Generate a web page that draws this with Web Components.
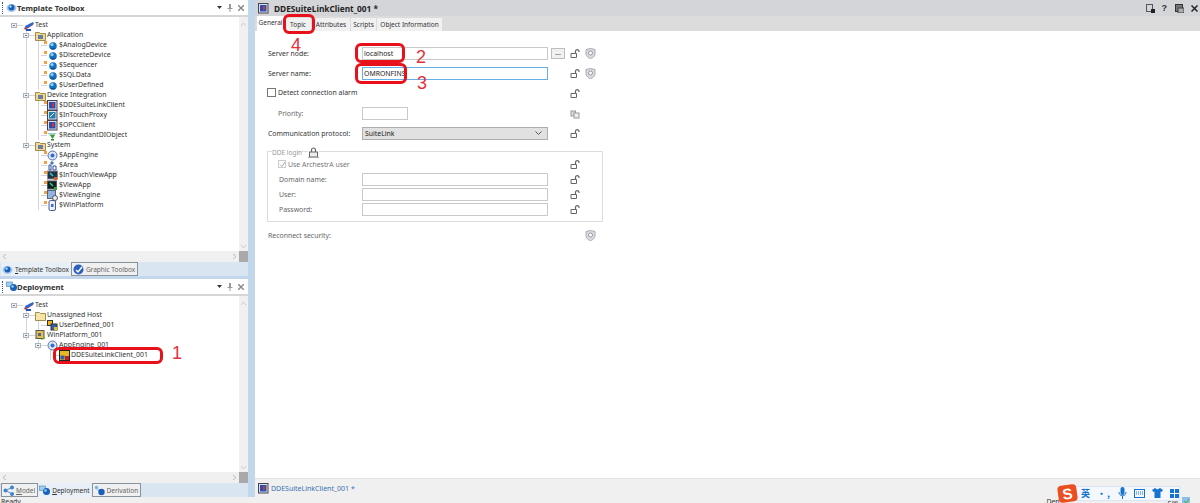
<!DOCTYPE html>
<html><head><meta charset="utf-8"><style>
html,body{margin:0;padding:0;background:#fff}
body{width:1200px;height:503px;overflow:hidden;font:6.9px "Noto Sans","Liberation Sans",sans-serif;color:#333}
</style></head><body>
<app-shell></app-shell>
<script>
const I={
 app:'<path d="M1 8 9 3l1 2-8 5z" fill="#d33"/><path d="M2 6l8-4 1 2-8 5z" fill="#36c"/><path d="M3 9h5v2H3z" fill="#25a"/>',
 globe:'<circle cx="6" cy="6" r="3.800" fill="#1470c0"/><circle cx="5" cy="4.600" r="1.600" fill="#8fd0f5"/><path d="M3.200 8.200a3.600 3.600 0 0 0 5.600 0z" fill="#0a4a90"/>',
 folder:'<path d="M.5 2.500h4l1 1h5v7H.5z" fill="#f0d890" stroke="#8a7530" stroke-width=".8"/><rect x="3" y="5" width="5" height="4" fill="#6a7fa0"/>',
 folderplain:'<path d="M.5 2.500h4l1 1h5v7H.5z" fill="#f7e5a5" stroke="#8a7530" stroke-width=".8"/>',
 dev:'<rect x=".5" y=".5" width="9.500" height="9.500" fill="#dde" stroke="#445"/><rect x="2" y="2" width="6.500" height="6.500" fill="#2650b0"/><rect x="5" y="3" width="2" height="4" fill="#c33"/>',
 dev2:'<rect x=".5" y=".5" width="9.500" height="9.500" fill="#dde" stroke="#445"/><rect x="2" y="2" width="6.500" height="6.500" fill="#2080b0"/><path d="M3 7l4-4" stroke="#fff"/>',
 red:'<path d="M0 3h10L5 7z" fill="#9cc"/><path d="M3 5h5L5.500 9z" fill="#3a9a20"/><path d="M4 9h3v1.500H4z" fill="#383"/>',
 engine:'<circle cx="5.500" cy="5.500" r="4.500" fill="#dfe6f5" stroke="#5570b0"/><circle cx="5.500" cy="5.500" r="2" fill="#2a70d0"/>',
 area:'<path d="M5 1l2 2-2 2-2-2z" fill="#4a70c0"/><path d="M2 5v5h2V5zM6 6v4h3V6z" fill="none" stroke="#2a50a0"/>',
 view:'<rect x=".5" y="1" width="10" height="8" fill="#234" stroke="#889"/><path d="M3 3l3 3" stroke="#3cc" stroke-width="1.500"/><rect x="7" y="7" width="3" height="3" fill="#e06020"/>',
 view2:'<rect x=".5" y="1" width="9" height="8" fill="#122" stroke="#556"/><path d="M3 3l3 3" stroke="#3c8" stroke-width="1.500"/><rect x="7" y="7" width="3" height="3" fill="#3a3"/>',
 vengine:'<rect x=".5" y=".5" width="8" height="8" fill="#8fb5e0" stroke="#568"/><circle cx="8" cy="8" r="2.500" fill="#eee" stroke="#556"/>',
 plat:'<rect x="2" y=".5" width="6.500" height="10" rx="1.500" fill="#eef" stroke="#4a5a90"/><rect x="4" y="4" width="2.500" height="3" fill="#3a70c0"/>',
 inst:'<rect x=".5" y=".5" width="5" height="5" fill="#e8b820" stroke="#333"/><rect x="4" y="4" width="6" height="6" fill="#3060b0" stroke="#333"/><rect x="7" y="7" width="3" height="3" fill="#e8c020"/>',
 instw:'<rect x="1" y=".5" width="8" height="8" fill="#ddc060" stroke="#555"/><rect x="3" y="3" width="3" height="3" fill="#666"/><path d="M6 10l3-4 1 3z" fill="#7ab030"/>',
 instd:'<rect x=".5" y=".5" width="10" height="10" fill="#e8b820" stroke="#222"/><rect x="1.500" y="5.500" width="4" height="4" fill="#3060b0"/><rect x="6" y="6" width="4" height="4" fill="#c02020"/>',
 model:'<circle cx="2.500" cy="5.500" r="2" fill="#3a7fd0"/><circle cx="9" cy="2.500" r="2" fill="#3a7fd0"/><circle cx="9" cy="9" r="2" fill="#3a7fd0"/><path d="M2.500 5.500 9 2.500M2.500 5.500 9 9" stroke="#5a8fd0"/>',
 deploy:'<rect x=".5" y="1" width="6" height="4.500" fill="#9cd0f0" stroke="#5a90c0" stroke-width=".7"/><circle cx="7.500" cy="6.500" r="3.500" fill="#1a60b8"/><circle cx="6.500" cy="5.500" r="1.300" fill="#8fd0f5"/>',
 deriv:'<path d="M1 2l5 3-2 1z" fill="#9cd0f0"/><circle cx="7.500" cy="7" r="3.200" fill="#1a60b8"/><circle cx="2.500" cy="2.500" r="1.800" fill="#7ab8e8"/>',
 tmpl:'<ellipse cx="5.500" cy="6" rx="5" ry="4" fill="#a8c8ee"/><circle cx="5.500" cy="5.500" r="3" fill="#1a60b8"/><circle cx="4.500" cy="4.500" r="1.200" fill="#9fd8f8"/>',
 gfx:'<circle cx="5.500" cy="5.500" r="5" fill="#2a60c0"/><path d="M3 6l2 2 4-5" stroke="#fff" stroke-width="1.500" fill="none"/>',
 lock:'<path d="M1 5.500h5.500v4H1z" fill="#fff" stroke="#666"/><path d="M5.500 5.500V3a1.800 1.800 0 0 1 3.500 0V4" fill="none" stroke="#666" stroke-width="1.200"/>',
 lockd:'<rect x="1" y="3" width="4.500" height="5" fill="#ddd" stroke="#999"/><rect x="4" y="5" width="5" height="5" fill="#eee" stroke="#999"/>',
 lockc:'<rect x="1.500" y="5" width="8" height="5" fill="#eee" stroke="#666"/><path d="M3.500 5V3a2 2 0 0 1 4 0v2" fill="none" stroke="#666" stroke-width="1.200"/><path d="M0 10.500h11" stroke="#aaa"/>',
 shield:'<path d="M1 1.500 5.500.5l4.500 1v4.500C10 8.500 7 10 5.500 11 4 10 1 8.500 1 6z" fill="#d8dcdc" stroke="#aab"/><circle cx="5.500" cy="5" r="2" fill="#fff" stroke="#999"/>'
};
const svg=(k,w=11,h=11,vb='0 0 11 11')=>`<svg width="${w}" height="${h}" viewBox="${vb}" style="display:block;flex:none">${I[k]||''}</svg>`;
function def(name,html,init){customElements.define(name,class extends HTMLElement{connectedCallback(){if(this.shadowRoot)return;const r=this.attachShadow({mode:'open'});r.innerHTML=typeof html==='function'?html(this):html;init&&init(r,this)}})}

def('tree-row',h=>{
 const d=+h.getAttribute('depth'),box=h.hasAttribute('box'),leaf=h.hasAttribute('leaf'),g=(h.getAttribute('guides')||'').split(',').filter(Boolean);
 const bg=g.map(x=>`linear-gradient(#d4d4d4,#d4d4d4) ${x}px 0/1px 100% no-repeat`).join(',');
 const base=[17,29,41,53][d];
 return `<style>:host{display:flex;height:10px;align-items:center;${bg?'background:'+bg+';':''}}
 .pad{width:${base}px;flex:none;display:flex;justify-content:flex-end}
 .box{width:6px;height:5px;border:1px solid #a9b4c0;background:#eef1f4;box-sizing:border-box;position:relative}
 .box:after{content:"";position:absolute;left:1px;right:1px;top:1px;height:1px;background:#778}
 .tick{width:6px;height:1px;background:#d4d4d4;flex:none}
 .dot{width:3px;height:3px;background:#f8a040;margin-left:-3px;margin-top:-6px;flex:none}
 span{white-space:nowrap;margin-left:1px;color:#333;font-size:6.900px;line-height:10px}
 </style><div class="pad">${box?'<div class="box"></div>':''}</div>
 <div class="tick"></div>${leaf?'<div class="dot"></div>':''}
 ${svg(h.getAttribute('icon'))}<span>${h.getAttribute('label')}</span>`;
});

def('dock-header',h=>`<style>:host{display:flex;align-items:center;height:15px;background:#fff;border-bottom:2px solid #d6d6d6}
 .grip{width:1px;height:12px;margin:0 2px 0 2px;border-left:1px dotted #2a50a0;flex:none}
 b{font-size:7.700px;color:#333;white-space:nowrap}
 .sp{flex:1}.c{display:flex;gap:5px;align-items:center;margin-right:4px;color:#666}
 </style><div class="grip"></div>${svg(h.getAttribute('icon'),11,11)}<b>${h.getAttribute('label')}</b><div class="sp"></div>
 <div class="c"><svg width="5" height="3"><path d="M0 0h5L2.500 3z" fill="#333"/></svg>
 <svg width="6" height="8"><path d="M2 0h2v4h1.500v1H3.500v3h-1V5H.5V4H2z" fill="#999"/></svg>
 <svg width="6" height="6"><path d="M0 0l6 6M6 0 0 6" stroke="#888" stroke-width="1.400"/></svg></div>`);

def('tree-pane',h=>`<style>:host{display:flex;flex:1;min-height:0;background:#fff}
 .m{flex:1;min-width:0;display:flex;flex-direction:column}
 .t{flex:1;padding-top:${h.getAttribute('pt')||3}px;min-height:0;overflow:hidden}
 .hs{height:11px;background:#f0f0f0;display:flex;justify-content:space-between;align-items:center;padding:0 3px;flex:none}
 .v{width:9px;background:#f0f0f0;display:flex;flex-direction:column;align-items:center;flex:none}
 .corner{width:9px;height:11px;background:#a9a9a9;flex:none}
 .up{margin-top:6px}.dn{margin-bottom:3px}
 </style><div class="m"><div class="t"><slot></slot></div><div class="hs"><svg width="3" height="5"><path d="M3 0 0 2.500 3 5" fill="none" stroke="#bbb"/></svg><svg width="3" height="5"><path d="M0 0 3 2.500 0 5" fill="none" stroke="#bbb"/></svg></div></div>
 <div class="v"><svg class="up" width="5" height="3"><path d="M0 3 2.500 0 5 3" fill="none" stroke="#ccc"/></svg><div style="flex:1"></div><svg class="dn" width="5" height="3"><path d="M0 0 2.500 3 5 0" fill="none" stroke="#ccc"/></svg><div class="corner"></div></div>`);

def('dock-tabs',`<style>:host{display:flex;height:14px;background:#d9e5f1;align-items:stretch;padding-left:1px;flex:none}</style><slot></slot>`);
def('dock-tab',h=>`<style>:host{display:flex;align-items:center;gap:2px;padding:0 2px 0 1px;font-size:6.500px;white-space:nowrap;color:${h.hasAttribute('sel')?'#333':'#666'};background:${h.hasAttribute('sel')?'#e9eff6':'#f0f0f0'};${h.hasAttribute('sel')?'':'border:1px solid #8a9299;box-sizing:border-box;'}}
 u{text-decoration:underline}</style>${svg(h.getAttribute('icon'),11,11)}<span><u>${h.getAttribute('u')}</u>${h.getAttribute('rest')}</span>`);

def('left-dock',`<style>:host{display:flex;flex-direction:column;width:248px;height:497px;flex:none}
 .s{height:3px;background:#c3d7ec;flex:none}
 .a{display:flex;flex-direction:column;height:276px;flex:none}.b{display:flex;flex-direction:column;flex:1;min-height:0}
 </style><div class="a"><slot name="a"></slot></div><div class="s"></div><div class="b"><slot name="b"></slot></div>`);

def('lock-ico',h=>`<style>:host{display:block;width:11px;height:11px}</style>${svg(h.getAttribute('k')||'lock')}`);

def('form-row',h=>{
 const rh=h.getAttribute('rh')||20;
 const ind=+(h.getAttribute('ind')||0)+1, lw=h.getAttribute('lw')||95;
 return `<style>:host{display:flex;align-items:center;height:${rh}px}
 .l{width:${lw}px;padding-left:${ind}px;box-sizing:border-box;flex:none;white-space:nowrap;font-size:6.900px;color:${h.hasAttribute('dim')?'#666':'#333'};}
 .f{flex:none;display:flex;min-width:186px;gap:3px;align-items:center}
 .r{display:flex;gap:4px;margin-left:${h.getAttribute('rm')||22}px;align-items:center}
 </style><div class="l">${h.getAttribute('label')||''}<slot name="label"></slot></div><div class="f"><slot></slot></div><div class="r"><slot name="r"></slot></div>`});

def('text-box',h=>`<style>:host{display:block;box-sizing:border-box;height:13px;width:${h.getAttribute('w')||186}px;flex:none;border:1px solid ${h.hasAttribute('focus')?'#66b0ea':'#c9c9c9'};background:#fff;font-size:6.900px;line-height:11px;padding-left:1px;color:#222;white-space:nowrap}</style><slot></slot>`);
def('dots-btn',`<style>:host{display:block;box-sizing:border-box;width:14px;height:11px;border:1px solid #bdbdbd;background:#f0f0f0;font-size:7px;line-height:7px;text-align:center;color:#333;flex:none}</style><slot></slot>`);

def('check-box',h=>`<style>:host{display:inline-flex;align-items:center;gap:2px;white-space:nowrap;font-size:6.900px;color:${h.hasAttribute('dim')?'#777':'#333'}}
 i{display:block;box-sizing:border-box;width:${h.getAttribute('s')||9}px;height:${h.getAttribute('s')||9}px;border:1px solid ${h.hasAttribute('dim')?'#ccc':'#777'};background:#fff}
 svg{display:block}</style><i>${h.hasAttribute('checked')?'<svg width="7" height="7"><path d="M1 3.500 3 5.500 6 1" fill="none" stroke="#aaa"/></svg>':''}</i><slot></slot>`);

def('group-box',`<style>:host{display:block;box-sizing:border-box;width:336px;height:71px;border:1px solid #dcdcdc;margin-top:8px;position:relative;padding-top:5px}
 .lg{position:absolute;left:4px;top:-5px;display:flex;gap:6px;align-items:center;font-size:6.500px;color:#999;line-height:11px}
 ::slotted(*){background:#fff}
 </style><div class="lg"><slot name="legend"></slot></div><slot></slot>`);

def('form-panel',`<style>:host{display:block;padding:12px 0 0 12px}</style><slot></slot>`);

def('red-mark',h=>`<style>:host{position:absolute;left:${h.getAttribute('x')}px;top:${h.getAttribute('y')}px;width:${h.getAttribute('w')}px;height:${h.getAttribute('h')}px;box-sizing:border-box;border:3px solid #e8101a;border-radius:6px}</style>`);
def('red-num',h=>`<style>:host{position:absolute;left:${h.getAttribute('x')}px;top:${h.getAttribute('y')}px;font:18px/20px "Liberation Sans",sans-serif;color:#e5303a}</style><slot></slot>`);

def('doc-tabs',`<style>:host{display:flex;height:15px;background:#dcdcdc;align-items:flex-end;padding-left:2px;font-size:6.500px;color:#333;flex:none}</style><slot></slot>`);
def('doc-tab',h=>`<style>:host{display:block;width:${h.getAttribute('w')}px;text-align:center;height:${h.hasAttribute('sel')?15:13}px;line-height:13px;margin-right:1px;background:${h.hasAttribute('sel')?'#fff':'#f1f1f1'};white-space:nowrap}</style><slot></slot>`);

def('ime-bar',`<style>:host{position:absolute;left:1058px;top:484px;height:18px;width:110px;display:flex;align-items:center}
 .s{width:19px;height:17px;background:#ea4f21;border-radius:4px;transform:rotate(-8deg);color:#fff;font:bold 15px/17px "Liberation Sans",sans-serif;text-align:center;flex:none;position:relative;z-index:1}
 .b{flex:1;height:15px;margin-left:-2px;background:#f4f8fd;border:1px solid #d8e6f5;box-sizing:border-box;display:flex;align-items:center;gap:7px;padding-left:5px;color:#1673d0;font:bold 9px "Noto Sans CJK SC",sans-serif}
 svg{display:block}</style><div class="s">S</div><div class="b"><span>英</span><span style="letter-spacing:1px">•,</span>
 <svg width="9" height="12"><rect x="2.500" y="0" width="4" height="8" rx="2" fill="#1673d0"/><path d="M1 5c0 5 7 5 7 0M4.500 9v3" fill="none" stroke="#1673d0"/></svg>
 <svg width="11" height="9"><rect x=".5" y=".5" width="10" height="8" fill="none" stroke="#1673d0"/><path d="M2 3h7M2 5h7" stroke="#1673d0" stroke-dasharray="1 1"/></svg>
 <svg width="11" height="10"><path d="M3 0 0 2l1.500 2 1-.5V10h6V3.500l1 .5L11 2 8 0 5.500 1.500z" fill="#1673d0"/></svg>
 <svg width="9" height="9"><path d="M0 0h4v4H0zM5 0h4v4H5zM0 5h4v4H0zM5 5h4v4H5z" fill="#1673d0"/></svg></div>`);

def('status-bar',`<style>:host{display:flex;height:6px;background:#f0f0f0;overflow:hidden;font-size:6.900px;line-height:10px;color:#333;padding-left:1px}
 .g{flex:1}</style><span>Ready</span><div class="g"></div><span style="margin-right:108px">Dep</span><span style="margin-right:4px">PM</span><svg width="8" height="6" style="margin-right:10px;display:block"><rect width="8" height="8" fill="#8fbfe8"/><path d="M2 4l2 2 3-4" stroke="#4a4" fill="none"/></svg>`);

def('main-pane',`<style>:host{display:flex;flex-direction:column;flex:1;min-width:0;height:497px}
 .tb{height:16px;background:#d4d5d9;display:flex;align-items:center;padding-left:3px;gap:5px;flex:none}
 .tb b{font-size:8.300px;color:#222;white-space:nowrap}
 .sp{flex:1}.ic{display:flex;gap:7px;margin-right:2px;align-items:center;font:bold 9px "Liberation Sans",sans-serif;color:#333}
 .body{flex:1;min-height:0;background:#fff}
 .bot{height:19px;flex:none;background:#f0f0f0;border-top:1px solid #e2e2e2;box-sizing:border-box;display:flex;align-items:center;padding-left:3px;gap:2px;color:#3a70b0;font-size:7px}
 svg{display:block}
 </style><div class="tb">${svg('dev',11,11)}<b>DDESuiteLinkClient_001 *</b><div class="sp"></div><div class="ic">
 <svg width="9" height="9"><rect x=".5" y=".5" width="6" height="7" fill="none" stroke="#555"/><rect x="5" y="5" width="4" height="4" fill="#222"/></svg><span style="margin-right:1px">?</span>
 <svg width="9" height="9"><rect x=".5" y=".5" width="7" height="7" fill="#777" stroke="#333"/><rect x="3" y="4" width="6" height="5" fill="#aaa" stroke="#444"/></svg>
 <svg width="7" height="7"><path d="M.5.5l6 6M6.500.5l-6 6" stroke="#222" stroke-width="1.500"/></svg></div></div>
 <slot name="tabs"></slot><div class="body"><slot></slot></div><div class="bot">${svg('dev',11,11)}<span>DDESuiteLinkClient_001 *</span></div>`);

def('select-box',`<style>:host{display:flex;box-sizing:border-box;width:186px;height:13px;border:1px solid #adadad;background:#e1e1e1;font-size:6.900px;align-items:center;padding:0 5px 0 2px;justify-content:space-between;color:#222}</style><slot></slot><svg width="7" height="4"><path d="M.5.5 3.500 3.500 6.500.5" fill="none" stroke="#555"/></svg>`);

def('app-shell',`<style>:host{display:block;width:1200px;height:503px;position:relative;overflow:hidden}
 .top{display:flex;height:497px}.sp{width:7px;background:#c3d7ec;flex:none}
 </style><div class="top"><slot name="left"></slot><div class="sp"></div><slot name="main"></slot></div><slot name="status"></slot><slot></slot>`,(r,h)=>{
 const rows=(a,gs)=>a.map(([d,ic,l,o],i)=>`<tree-row depth="${d}" icon="${ic}" label="${l}" ${o||''} guides="${gs(d,i)}"></tree-row>`).join('');
 const gA=(d,i)=>{if(d==0)return '';const g=[];if(i<=12)g.push(26);if(d==2)g.push(38);return g.join(',')};
 const gB=(d,i)=>{if(d==0)return '';const g=[];if(i<=3)g.push(26);if(i==2||i==4)g.push(38);if(i==5)g.push(50);return g.join(',')};
 const A=[[0,'app','Test','box'],[1,'folder','Application','box'],[2,'globe','$AnalogDevice','leaf'],[2,'globe','$DiscreteDevice','leaf'],[2,'globe','$Sequencer','leaf'],[2,'globe','$SQLData','leaf'],[2,'globe','$UserDefined','leaf'],[1,'folder','Device Integration','box'],[2,'dev','$DDESuiteLinkClient','leaf'],[2,'dev2','$InTouchProxy','leaf'],[2,'dev','$OPCClient','leaf'],[2,'red','$RedundantDIObject','leaf'],[1,'folder','System','box'],[2,'engine','$AppEngine','leaf'],[2,'area','$Area','leaf'],[2,'view','$InTouchViewApp','leaf'],[2,'view2','$ViewApp','leaf'],[2,'vengine','$ViewEngine','leaf'],[2,'plat','$WinPlatform','leaf']];
 const B=[[0,'app','Test','box'],[1,'folderplain','Unassigned Host','box'],[2,'inst','UserDefined_001',''],[1,'instw','WinPlatform_001','box'],[2,'engine','AppEngine_001','box'],[3,'instd','DDESuiteLinkClient_001','']];
 h.innerHTML=`
 <left-dock slot="left">
  <dock-header slot="a" icon="tmpl" label="Template Toolbox"></dock-header>
  <tree-pane slot="a">${rows(A,gA)}</tree-pane>
  <dock-tabs slot="a"><dock-tab sel icon="tmpl" u="T" rest="emplate Toolbox"></dock-tab><dock-tab icon="gfx" u="" rest="Graphic Toolbox"></dock-tab></dock-tabs>
  <dock-header slot="b" icon="deploy" label="Deployment"></dock-header>
  <tree-pane slot="b" pt="4">${rows(B,gB)}</tree-pane>
  <dock-tabs slot="b"><dock-tab icon="model" u="M" rest="odel"></dock-tab><dock-tab sel icon="deploy" u="D" rest="eployment"></dock-tab><dock-tab icon="deriv" u="" rest="Derivation"></dock-tab></dock-tabs>
 </left-dock>
 <main-pane slot="main">
  <doc-tabs slot="tabs"><doc-tab sel w="27">General</doc-tab><doc-tab w="26">Topic</doc-tab><doc-tab w="38">Attributes</doc-tab><doc-tab w="25">Scripts</doc-tab><doc-tab w="65">Object Information</doc-tab></doc-tabs>
  <form-panel>
   <form-row label="Server node:" rm="5"><text-box>localhost</text-box><dots-btn>...</dots-btn><lock-ico slot="r"></lock-ico><lock-ico slot="r" k="shield"></lock-ico></form-row>
   <form-row label="Server name:"><text-box focus>OMRONFINS</text-box><lock-ico slot="r"></lock-ico><lock-ico slot="r" k="shield"></lock-ico></form-row>
   <form-row><check-box slot="label" style="margin-left:-1px">Detect connection alarm</check-box><lock-ico slot="r"></lock-ico></form-row>
   <form-row label="Priority:" ind="10" dim><text-box w="46"></text-box><lock-ico slot="r" k="lockd"></lock-ico></form-row>
   <form-row label="Communication protocol:"><select-box>SuiteLink</select-box><lock-ico slot="r"></lock-ico></form-row>
   <group-box>
    <span slot="legend">DDE login</span><lock-ico slot="legend" k="lockc"></lock-ico>
    <form-row rh="15" lw="94"><check-box slot="label" dim checked s="8" style="margin-left:9px;margin-top:1px">Use ArchestrA user</check-box><lock-ico slot="r"></lock-ico></form-row>
    <form-row rh="15" lw="94" label="Domain name:" ind="10" dim><text-box></text-box><lock-ico slot="r"></lock-ico></form-row>
    <form-row rh="15" lw="94" label="User:" ind="10" dim><text-box></text-box><lock-ico slot="r"></lock-ico></form-row>
    <form-row rh="15" lw="94" label="Password:" ind="10" dim><text-box></text-box><lock-ico slot="r"></lock-ico></form-row>
   </group-box>
   <form-row rh="26" label="Reconnect security:" dim><span slot="r" style="width:11px"></span><lock-ico slot="r" k="shield"></lock-ico></form-row>
  </form-panel>
 </main-pane>
 <status-bar slot="status"></status-bar>
 <red-mark x="53" y="347" w="110" h="17"></red-mark><red-mark x="283" y="14" w="32" h="20"></red-mark><red-mark x="355" y="43" w="50" h="20"></red-mark><red-mark x="355" y="63" w="52" h="21"></red-mark>
 <red-num x="172" y="343">1</red-num><red-num x="416" y="47">2</red-num><red-num x="417" y="73">3</red-num><red-num x="291" y="35">4</red-num>
 <ime-bar></ime-bar>`;
 });
</script>
</body></html>
